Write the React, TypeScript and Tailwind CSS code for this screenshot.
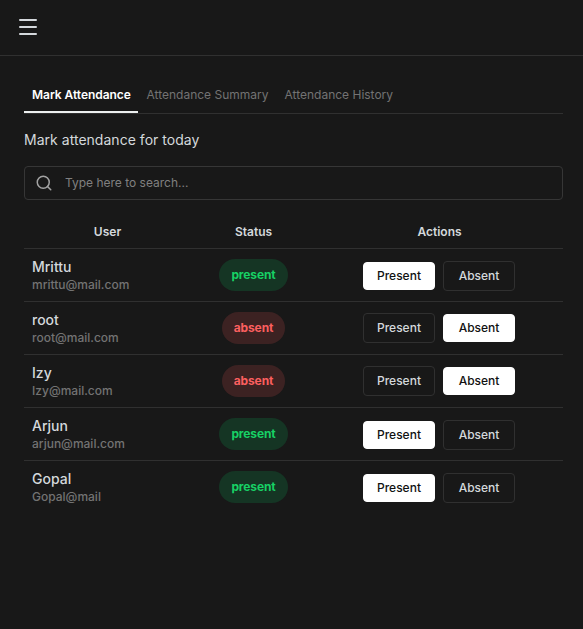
import React from "react";
import { Menu, Search } from "lucide-react";

type Status = "present" | "absent";

const users: { name: string; email: string; status: Status }[] = [
  { name: "Mrittu", email: "mrittu@mail.com", status: "present" },
  { name: "root", email: "root@mail.com", status: "absent" },
  { name: "Izy", email: "Izy@mail.com", status: "absent" },
  { name: "Arjun", email: "arjun@mail.com", status: "present" },
  { name: "Gopal", email: "Gopal@mail", status: "present" },
];

function Badge({ status }: { status: Status }) {
  const tone =
    status === "present" ? "w-[69px] bg-[#153524] text-[#17d165]" : "w-[63px] bg-[#3c2222] text-[#fb5f5f]";
  return (
    <span className={`flex h-8 items-center justify-center rounded-full pb-px text-xs font-bold tracking-[-0.01em] ${tone}`}>
      {status}
    </span>
  );
}

function ActionButton({ label, active }: { label: string; active: boolean }) {
  const tone = active
    ? "h-7 border-white bg-white text-[#111111]"
    : "h-[30px] border-[#303030] text-[#d4d8dc]";
  return (
    <button className={`flex w-[72px] items-center justify-center rounded-[4px] border pl-px text-xs font-medium ${tone}`}>
      {label}
    </button>
  );
}

export default function App() {
  return (
    <div className="min-h-screen bg-[#181818] font-['Inter',sans-serif] text-[#d4d8dc]">
      <header className="flex h-14 items-center border-b border-[#303030] px-4 pb-0.5">
        <Menu size={24} strokeWidth={2} />
      </header>
      <main className="pt-5 pr-5 pl-6">
        <nav className="flex h-[38px] border-b border-[#303030] text-xs leading-[38px] text-[#737373]">
          <span className="mr-px h-[37px] w-[114px] border-b-2 border-[#ecefef] pl-2 font-semibold tracking-[-0.003em] whitespace-nowrap text-white">Mark Attendance</span>
          <span className="pr-2 pl-[7.5px]">Attendance Summary</span>
          <span className="px-2">Attendance History</span>
        </nav>
        <h1 className="mt-4 text-sm leading-5 tracking-[0.002em]">Mark attendance for today</h1>
        <label className="mt-4 flex h-[34px] items-center rounded-[4px] border border-[#363636] pl-[10px]">
          <Search size={18} strokeWidth={2} className="text-[#a3a3a3]" />
          <input className="ml-3 flex-1 bg-transparent text-xs outline-none placeholder:text-[#808080]" placeholder="Type here to search..." />
        </label>
        <table className="mt-[15px] w-full table-fixed border-separate border-spacing-0">
          <colgroup>
            <col className="w-[167px]" />
            <col className="w-[125px]" />
            <col />
          </colgroup>
          <thead>
            <tr className="h-[34px] text-xs *:border-b *:border-[#303030] *:p-0 *:font-semibold">
              <th>User</th>
              <th>Status</th>
              <th>Actions</th>
            </tr>
          </thead>
          <tbody>
            {users.map((user) => (
              <tr key={user.name} className="h-[53px] *:border-b *:border-[#303030] *:p-0 last:*:border-transparent">
                <td>
                  <div className="pt-0.5 pl-2">
                    <p className="text-sm leading-[18px] font-medium">{user.name}</p>
                    <p className="text-xs leading-[18px] font-medium text-[#737373]">{user.email}</p>
                  </div>
                </td>
                <td>
                  <div className="flex justify-center"><Badge status={user.status} /></div>
                </td>
                <td>
                  <div className={`flex items-center justify-center gap-2 pr-0.5 ${user.status === "present" ? "pt-px" : "pb-px"}`}>
                    <ActionButton label="Present" active={user.status === "present"} />
                    <ActionButton label="Absent" active={user.status === "absent"} />
                  </div>
                </td>
              </tr>
            ))}
          </tbody>
        </table>
      </main>
    </div>
  );
}
